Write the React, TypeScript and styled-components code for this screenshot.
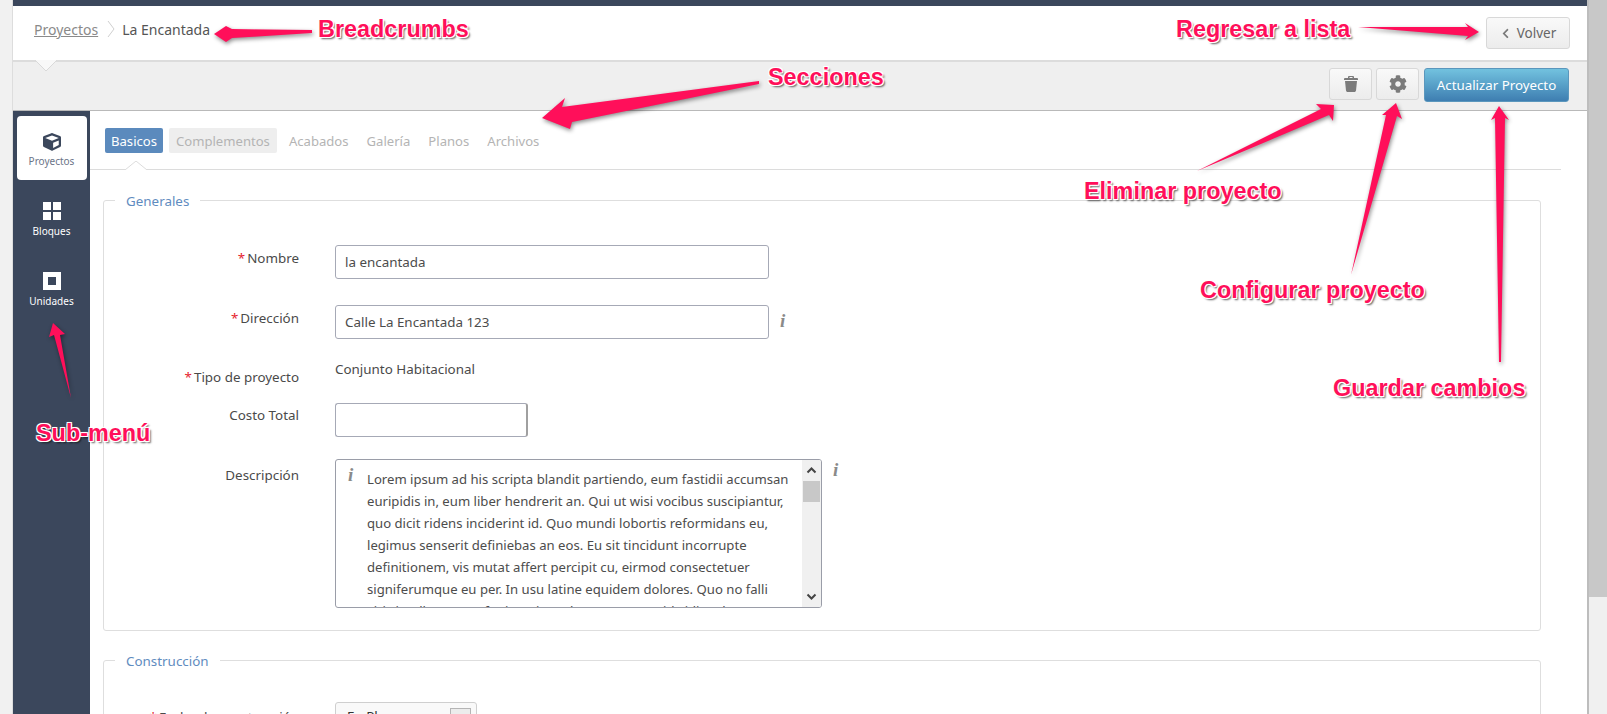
import { createGlobalStyle, styled } from "styled-components";
import { FaCog, FaCube, FaChevronLeft } from "react-icons/fa";

const GlobalStyle = createGlobalStyle`
  html, body {
    margin: 0;
    padding: 0;
    height: 714px;
    overflow: hidden;
    background: #fff;
  }
  * {
    box-sizing: border-box;
  }
`;

const uiFont = `"Noto Sans", "Open Sans", sans-serif`;

const Page = styled.div`
  position: relative;
  display: flex;
  width: 1607px;
  height: 714px;
  overflow: hidden;
  font-family: ${uiFont};
  font-size: 13.4px;
  color: #4c4c4c;
`;

const Gutter = styled.div`
  flex: 0 0 13px;
  background: #f1f1f1;
  border-right: 1px solid #ddd;
`;

const Main = styled.div`
  flex: 0 0 1576px;
  display: flex;
  flex-direction: column;
  border-right: 2px solid #bdbdbd;
  background: #fff;
`;

const TopStripe = styled.div`
  flex: 0 0 6px;
  background: #3b475c;
`;

const Header = styled.header`
  position: relative;
  flex: 0 0 56px;
  display: flex;
  align-items: flex-start;
  justify-content: space-between;
  padding: 11px 17px 0 21px;
  border-bottom: 2px solid #dcdcdc;
`;

const Crumbs = styled.nav`
  display: flex;
  align-items: center;
  height: 24px;
  font-size: 14px;
`;

const CrumbLink = styled.a`
  color: #8a8a8a;
  text-decoration: underline;
`;

const CrumbSep = styled.svg`
  width: 8px;
  height: 18px;
  margin: 0 7px 0 9px;
`;

const CrumbCurrent = styled.span`
  color: #555;
`;

const HeaderNotch = styled.svg`
  position: absolute;
  left: 22px;
  bottom: -12px;
  width: 22px;
  height: 12px;
  z-index: 2;
`;

const GreyButton = styled.button`
  display: inline-flex;
  align-items: center;
  justify-content: center;
  gap: 6px;
  height: 32px;
  padding: 0;
  border: 1px solid #d8d8d8;
  border-radius: 3px;
  background: linear-gradient(#f9f9f9, #ececec);
  color: #666;
  font-family: inherit;
  font-size: 13.5px;
`;

const BackButton = styled(GreyButton)`
  width: 84px;
`;

const IconButton = styled(GreyButton)`
  width: 43px;
  font-size: 18px;
  color: #7b7b7b;
`;

const Toolbar = styled.div`
  flex: 0 0 49px;
  display: flex;
  align-items: flex-start;
  justify-content: flex-end;
  gap: 4px;
  padding: 6px 18px 0 0;
  background: #efefef;
  border-bottom: 1px solid #b9b9b9;
`;

const PrimaryButton = styled.button`
  width: 145px;
  height: 34px;
  margin-left: 1px;
  padding: 0;
  border: 1px solid #5b97bd;
  border-radius: 3px;
  background: linear-gradient(#72c2df, #3e7eb1);
  color: #fff;
  font-family: inherit;
  font-size: 13.3px;
`;

const Body = styled.div`
  flex: 1;
  display: flex;
  min-height: 0;
`;

const SideMenu = styled.aside`
  flex: 0 0 77px;
  display: flex;
  flex-direction: column;
  align-items: center;
  padding-top: 5px;
  background: #3b475c;
`;

const SideItem = styled.a<{ $active?: boolean }>`
  display: flex;
  flex-direction: column;
  align-items: center;
  width: 70px;
  height: ${(p) => (p.$active ? "64px" : "70px")};
  padding-top: ${(p) => (p.$active ? "17px" : "22px")};
  border-radius: 4px;
  background: ${(p) => (p.$active ? "#fff" : "transparent")};
  color: ${(p) => (p.$active ? "#6b7488" : "#fff")};
  font-size: 10px;
  line-height: 14px;
`;

const SideIcon = styled.svg`
  width: 18px;
  height: 18px;
  margin-bottom: 4px;
  fill: #fff;
`;

const CubeIcon = styled(FaCube)`
  width: 18px;
  height: 18px;
  margin-bottom: 3px;
  color: #3b475c;
`;

const Content = styled.main`
  position: relative;
  flex: 1;
  padding-right: 26px;
`;

const Tabs = styled.div`
  position: relative;
  display: flex;
  align-items: center;
  gap: 6px;
  height: 59px;
  padding: 17px 0 16px 15px;
  border-bottom: 1px solid #dcdcdc;
`;

const Tab = styled.a<{ $state?: "active" | "muted" }>`
  display: flex;
  align-items: center;
  height: 25px;
  padding: 0 ${(p) => (p.$state === "muted" ? "7px" : "6px")};
  border-radius: 2px;
  font-size: 13.1px;
  color: ${(p) => (p.$state === "active" ? "#fff" : "#b4b4b4")};
  background: ${(p) =>
    p.$state === "active" ? "#5b8abd" : p.$state === "muted" ? "#eeeeee" : "transparent"};
`;

const TabNotch = styled.svg`
  position: absolute;
  left: 35px;
  bottom: -1px;
  width: 22px;
  height: 9px;
`;

const Fieldset = styled.section`
  position: relative;
  width: 1438px;
  margin: 30px 0 0 13px;
  border: 1px solid #dedede;
  border-radius: 3px;
`;

const GeneralBox = styled(Fieldset)`
  height: 431px;
  padding-top: 44px;
`;

const BuildBox = styled(Fieldset)`
  height: 120px;
  margin-top: 29px;
  padding-top: 41px;
`;

const Legend = styled.h3`
  position: absolute;
  left: 11px;
  top: -10px;
  margin: 0;
  padding: 0 11px;
  background: #fff;
  color: #5f8cc0;
  font-size: 13.4px;
  font-weight: 400;
  line-height: 20px;
`;

const Row = styled.div<{ $height: number }>`
  display: flex;
  align-items: flex-start;
  height: ${(p) => p.$height}px;
`;

const Label = styled.label<{ $top?: number }>`
  flex: 0 0 195px;
  text-align: right;
  line-height: 20px;
  font-size: 13.4px;
  color: #4a4a4a;
  margin-top: ${(p) => p.$top ?? 0}px;
`;

const Req = styled.span`
  color: #e5232e;
  margin-right: 2px;
`;

const FieldSlot = styled.div`
  display: flex;
  align-items: flex-start;
  margin-left: 36px;
`;

const Input = styled.div<{ $width: number }>`
  display: flex;
  align-items: center;
  width: ${(p) => p.$width}px;
  height: 34px;
  padding: 0 9px;
  background: #fff;
  border: 1px solid #a6a9b6;
  border-radius: 3px;
  color: #4c4c4c;
`;

const CostInput = styled(Input)`
  border-right: 2px solid #a0a0a0;
`;

const Plain = styled.div`
  line-height: 20px;
  margin-top: -6px;
  color: #4a4a4a;
`;

const InfoMark = styled.i<{ $top?: number }>`
  margin: ${(p) => p.$top ?? 6}px 0 0 11px;
  font-family: "Liberation Serif", serif;
  font-weight: 700;
  font-size: 19px;
  line-height: 20px;
  color: #8a8a8a;
`;

const TextArea = styled.div`
  display: flex;
  width: 487px;
  height: 149px;
  border: 1px solid #9a9da8;
  border-radius: 3px;
  overflow: hidden;
`;

const TextGutter = styled.div`
  flex: 0 0 31px;
  padding-left: 12px;
`;

const InnerInfo = styled(InfoMark)`
  display: block;
  margin: 5px 0 0;
`;

const TextLines = styled.div`
  flex: 1;
  padding-top: 8px;
  font-size: 13.13px;
  line-height: 22px;
  white-space: nowrap;
  overflow: hidden;
  color: #4c4c4c;
`;

const ScrollTrack = styled.div`
  flex: 0 0 19px;
  display: flex;
  flex-direction: column;
  align-items: center;
  justify-content: space-between;
  background: #f0f0f0;
`;

const ScrollArrow = styled.svg`
  flex: 0 0 21px;
  width: 11px;
  height: 21px;
`;

const ScrollThumb = styled.div`
  flex: 0 0 21px;
  width: 17px;
  background: #c8c8c8;
`;

const ScrollGap = styled.div`
  flex: 1;
`;

const SelectBox = styled.div`
  display: flex;
  justify-content: space-between;
  width: 142px;
  height: 34px;
  padding: 5px 5px 0 11px;
  border: 1px solid #cfcfcf;
  border-radius: 3px;
  background: #f9f9f9;
  color: #333;
  line-height: 16px;
`;

const SelectHandle = styled.span`
  width: 21px;
  height: 26px;
  background: #ececec;
  border: 1px solid #b5b5b5;
`;

const PageScroll = styled.div`
  flex: 0 0 18px;
  background: #f0f0f0;
`;

const PageThumb = styled.div`
  height: 597px;
  background: #c8c8c8;
`;

const Note = styled.span<{ $x: number; $y: number }>`
  position: absolute;
  left: ${(p) => p.$x}px;
  top: ${(p) => p.$y}px;
  z-index: 6;
  font-family: "Liberation Sans", Arial, sans-serif;
  font-size: 23.4px;
  font-weight: 700;
  line-height: 26px;
  white-space: nowrap;
  color: #ff0f5a;
  text-shadow:
    -1px -1px 0 #fff,
    1px -1px 0 #fff,
    -1px 1px 0 #fff,
    1px 1px 0 #fff,
    0 0 2px #fff,
    2px 2px 2px rgba(0, 0, 0, 0.65);
`;

const ArrowLayer = styled.svg`
  position: absolute;
  left: 0;
  top: 0;
  z-index: 5;
  width: 1607px;
  height: 714px;
  pointer-events: none;
  filter: drop-shadow(1px 2px 2px rgba(0, 0, 0, 0.45));
`;

const loremLines = [
  "Lorem ipsum ad his scripta blandit partiendo, eum fastidii accumsan",
  "euripidis in, eum liber hendrerit an. Qui ut wisi vocibus suscipiantur,",
  "quo dicit ridens inciderint id. Quo mundi lobortis reformidans eu,",
  "legimus senserit definiebas an eos. Eu sit tincidunt incorrupte",
  "definitionem, vis mutat affert percipit cu, eirmod consectetuer",
  "signiferumque eu per. In usu latine equidem dolores. Quo no falli",
  "viris intellegam, ut fugit veritus placerat per. Ius id vidit volumus",
];

const arrows = [
  "312,30 232,29 226,26 214,34 226,42 232,38 312,33",
  "1358,27 1468,27 1465,23 1479,32 1465,40 1468,36",
  "759,81 562,107 565,98 542,118 570,129 572,122 759,84",
  "1197,171 1321,109 1316,104 1334,105 1333,121 1329,115",
  "1351,275 1386,115 1382,115 1396,103 1402,119 1397,116",
  "1499,362 1495,118 1491,120 1499,106 1509,120 1505,118 1501,362",
  "71,398 54,335 49,337 53,323 65,334 60,335",
];

const notes = [
  { text: "Breadcrumbs", x: 318, y: 16 },
  { text: "Regresar a lista", x: 1176, y: 16 },
  { text: "Secciones", x: 768, y: 64 },
  { text: "Eliminar proyecto", x: 1084, y: 178 },
  { text: "Configurar proyecto", x: 1200, y: 277 },
  { text: "Guardar cambios", x: 1333, y: 375 },
  { text: "Sub-menú", x: 36, y: 420 },
];

export default function App() {
  return (
    <Page>
      <GlobalStyle />
      <Gutter />
      <Main>
        <TopStripe />
        <Header>
          <Crumbs>
            <CrumbLink>Proyectos</CrumbLink>
            <CrumbSep viewBox="0 0 8 18">
              <path d="M1 1l6 8-6 8" fill="none" stroke="#cfcfcf" />
            </CrumbSep>
            <CrumbCurrent>La Encantada</CrumbCurrent>
          </Crumbs>
          <BackButton>
            <FaChevronLeft size={11} color="#7a7a7a" />
            Volver
          </BackButton>
          <HeaderNotch viewBox="0 0 22 12">
            <path d="M0 0l11 11L22 0" fill="#f8f8f8" stroke="#d9d9d9" />
          </HeaderNotch>
        </Header>
        <Toolbar>
          <IconButton aria-label="Eliminar">
            <svg width="14" height="16" viewBox="0 0 14 16" fill="#7b7b7b">
              <path d="M5 0h4a1 1 0 0 1 1 1v1h3a1 1 0 0 1 1 1v1H0V3a1 1 0 0 1 1-1h3V1a1 1 0 0 1 1-1zm.5 1v1h3V1z" />
              <path d="M1 5h12l-1 9.500c-.1.900-.8 1.500-1.600 1.500H3.600c-.8 0-1.500-.6-1.600-1.500z" />
            </svg>
          </IconButton>
          <IconButton aria-label="Configurar">
            <FaCog />
          </IconButton>
          <PrimaryButton>Actualizar Proyecto</PrimaryButton>
        </Toolbar>
        <Body>
          <SideMenu>
            <SideItem $active>
              <CubeIcon />
              Proyectos
            </SideItem>
            <SideItem>
              <SideIcon viewBox="0 0 18 18">
                <path d="M0 0h8v8H0zM10 0h8v8h-8zM0 10h8v8H0zM10 10h8v8h-8z" />
              </SideIcon>
              Bloques
            </SideItem>
            <SideItem>
              <SideIcon viewBox="0 0 18 18">
                <path fillRule="evenodd" d="M0 0h18v18H0zM5 5v8h8V5z" />
              </SideIcon>
              Unidades
            </SideItem>
          </SideMenu>
          <Content>
            <Tabs>
              <Tab $state="active">Basicos</Tab>
              <Tab $state="muted">Complementos</Tab>
              <Tab>Acabados</Tab>
              <Tab>Galería</Tab>
              <Tab>Planos</Tab>
              <Tab>Archivos</Tab>
              <TabNotch viewBox="0 0 22 9">
                <path d="M0 9L11 0l11 9" fill="#fff" stroke="#dcdcdc" />
              </TabNotch>
            </Tabs>
            <GeneralBox>
              <Legend>Generales</Legend>
              <Row $height={60}>
                <Label $top={3}>
                  <Req>*</Req>Nombre
                </Label>
                <FieldSlot>
                  <Input $width={434}>la encantada</Input>
                </FieldSlot>
              </Row>
              <Row $height={60}>
                <Label $top={3}>
                  <Req>*</Req>Dirección
                </Label>
                <FieldSlot>
                  <Input $width={434}>Calle La Encantada 123</Input>
                  <InfoMark>i</InfoMark>
                </FieldSlot>
              </Row>
              <Row $height={38}>
                <Label $top={2}>
                  <Req>*</Req>Tipo de proyecto
                </Label>
                <FieldSlot>
                  <Plain>Conjunto Habitacional</Plain>
                </FieldSlot>
              </Row>
              <Row $height={56}>
                <Label $top={2}>Costo Total</Label>
                <FieldSlot>
                  <CostInput $width={193} />
                </FieldSlot>
              </Row>
              <Row $height={149}>
                <Label $top={6}>Descripción</Label>
                <FieldSlot>
                  <TextArea>
                    <TextGutter>
                      <InnerInfo>i</InnerInfo>
                    </TextGutter>
                    <TextLines>
                      {loremLines.map((line) => (
                        <div key={line}>{line}</div>
                      ))}
                    </TextLines>
                    <ScrollTrack>
                      <ScrollArrow viewBox="0 0 11 21">
                        <path d="M1.500 12.500l4-4 4 4" fill="none" stroke="#444" strokeWidth="2" />
                      </ScrollArrow>
                      <ScrollThumb />
                      <ScrollGap />
                      <ScrollArrow viewBox="0 0 11 21">
                        <path d="M1.500 8.500l4 4 4-4" fill="none" stroke="#444" strokeWidth="2" />
                      </ScrollArrow>
                    </ScrollTrack>
                  </TextArea>
                  <InfoMark $top={1}>i</InfoMark>
                </FieldSlot>
              </Row>
            </GeneralBox>
            <BuildBox>
              <Legend>Construcción</Legend>
              <Row $height={40}>
                <Label $top={5}>
                  <Req>*</Req>Fecha de construcción
                </Label>
                <FieldSlot>
                  <SelectBox>
                    En Planos
                    <SelectHandle />
                  </SelectBox>
                </FieldSlot>
              </Row>
            </BuildBox>
          </Content>
        </Body>
      </Main>
      <PageScroll>
        <PageThumb />
      </PageScroll>
      <ArrowLayer viewBox="0 0 1607 714">
        {arrows.map((points) => (
          <polygon key={points} points={points} fill="#ff0f5a" />
        ))}
      </ArrowLayer>
      {notes.map((n) => (
        <Note key={n.text} $x={n.x} $y={n.y}>
          {n.text}
        </Note>
      ))}
    </Page>
  );
}
